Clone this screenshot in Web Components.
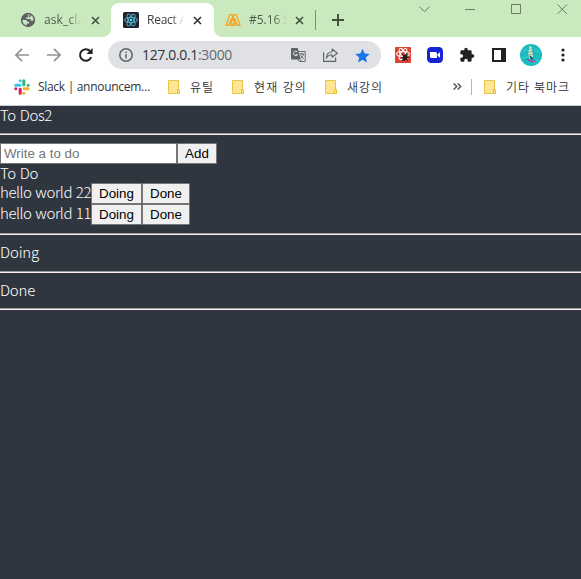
<!DOCTYPE html>
<html lang="ko"><head><meta charset="utf-8"><title>React App</title>
<style>
html,body{margin:0;height:100%;overflow:hidden}
body{font-family:"Open Sans","Noto Sans CJK KR",sans-serif;background:#2f3640}
</style></head><body>
<browser-window></browser-window>
<script>
const define=(name,html,after)=>customElements.define(name,class extends HTMLElement{
  constructor(){super();const t=document.createElement('template');t.innerHTML=html;this.attachShadow({mode:'open'}).append(t.content.cloneNode(true));}
  connectedCallback(){if(after)after(this,this.shadowRoot);}
});

/* One line of text whose tracking is adjusted so that it spans the given width. */
define('fit-text',`<style>:host{display:block;flex:none;white-space:pre;overflow:visible}span{display:inline-block}</style><span><slot></slot></span>`,(el,r)=>{
  const w=+el.getAttribute('w');el.style.width=w+'px';
  const s=r.querySelector('span'),n=el.textContent.length;
  const now=s.getBoundingClientRect().width;
  if(now)s.style.letterSpacing=((w-now)/n)+'px';
});

const icons={
globe:['0 0 16 16','<circle cx="8" cy="8" r="7.2" fill="#5f6368"/><path d="M2.5 8.1h3.3q1.5.1 1.6 1.7H9v1.6H6.6v2.2C3.8 13 2.4 10.8 2.5 8.1M7.7 2.4h1.8c.2.9-.4 1.5-1.4 1.5v1.5H6.4V7h4.3v1.8h2.4l.4-.5c.2-2.3-1-4.4-2.8-5.3v1.4l-1.2 1.2" fill="#cbe9bf"/>'],
x:['0 0 9 9','<path d="M1 1l7 7M8 1L1 8" stroke="currentColor" stroke-width="1.6" fill="none"/>'],
react:['0 0 16 16','<rect width="16" height="16" rx="1.5" fill="#20232a"/><g fill="none" stroke="#55bcd8" stroke-width=".9"><ellipse cx="8" cy="8" rx="6.5" ry="2.6"/><ellipse cx="8" cy="8" rx="6.5" ry="2.6" transform="rotate(60 8 8)"/><ellipse cx="8" cy="8" rx="6.5" ry="2.6" transform="rotate(120 8 8)"/></g><circle cx="8" cy="8" r="1.3" fill="#61dafb"/>'],
nomad:['0 0 16 14','<path d="M1 12.4L4.7 1.7H7l3.6 10.7M1 12.4h2.6L6.6 5M5.4 12.4L9 1.7h2.4L15 12.4h-2.6L9.4 5M5.4 12.4h2.2l1-3M10.6 12.4H8.4" fill="none" stroke="#f9a11b" stroke-width="1.25" stroke-linejoin="round"/>'],
plus:['0 0 12 12','<path d="M6 0v12M0 6h12" stroke="#3f4f3d" stroke-width="1.9"/>'],
chev:['0 0 11 7','<path d="M.6.7l4.9 5 4.9-5" fill="none" stroke="#68805f" stroke-width="1"/>'],
min:['0 0 11 11','<path d="M0 5.5h10" stroke="#68805f" stroke-width="1"/>'],
max:['0 0 11 11','<path d="M.5.5h9v9h-9z" fill="none" stroke="#68805f" stroke-width="1"/>'],
close:['0 0 11 11','<path d="M.5.5l9.5 9.5m0-9.5l-9.5 9.5" stroke="#68805f" stroke-width="1"/>'],
back:['0 0 16 14','<path d="M15 7H2M8 .9L1.9 7 8 13.1" fill="none" stroke="#919397" stroke-width="1.7"/>'],
fwd:['0 0 16 14','<path d="M1 7h13M8 .9L14.1 7 8 13.1" fill="none" stroke="#919397" stroke-width="1.7"/>'],
reload:['0 0 16 16','<path d="M13.2 10.2A5.8 5.8 0 1 1 12.1 4" fill="none" stroke="#202124" stroke-width="2"/><path d="M14.6 1v6.1H8.5z" fill="#202124"/>'],
info:['0 0 14 14','<circle cx="7" cy="7" r="6.2" fill="none" stroke="#5f6368" stroke-width="1.5"/><path d="M7 6v4.4M7 3.5v1.6" stroke="#5f6368" stroke-width="1.5"/>'],
trans:['0 0 15 15','<path d="M5.5 3.5h8.7v10H8.3L6.5 11" fill="none" stroke="#686b70" stroke-width="1"/><path d="M1 0h5.7l3 11.5H1q-1 0-1-1V1q0-1 1-1" fill="#5f6368"/><path d="M6.4 4.1a2.2 2.2 0 1 0 .2 2.5H4.5" fill="none" stroke="#e4e4e7"/><path d="M8.3 6h5M11 5v1m1.4 0c0 2-1.5 3-2.8 4M9.6 7.3l3 3.6M9 14l1.3-2.4" fill="none" stroke="#5f6368" stroke-width="1"/>'],
share:['0 0 15 14','<path d="M.6 4.3v9h12V9.6" fill="none" stroke="#5f6368" stroke-width="1.2"/><path d="M9.1 1l5.2 4.2-5.2 4V6.8q-3.8 0-5.8 3.4.4-6 5.8-6.5z" fill="none" stroke="#5f6368" stroke-width="1.1" stroke-linejoin="round"/>'],
star:['0 0 16 15','<path d="M8 .3l2.2 5 5.5.5-4.2 3.7 1.3 5.4L8 12.1l-4.8 2.8 1.3-5.4L.3 5.8l5.5-.5z" fill="#1a73e8"/>'],
rdev:['0 0 16 16','<rect width="16" height="16" rx=".7" fill="#dd4436"/><g fill="none" stroke="#fff" stroke-width="1.1"><ellipse cx="8" cy="7" rx="6.4" ry="2.5"/><ellipse cx="8" cy="7" rx="6.2" ry="2.4" transform="rotate(60 8 7)"/><ellipse cx="8" cy="7" rx="6.2" ry="2.4" transform="rotate(120 8 7)"/></g><path d="M7 7l2 2m3-3l-1 2M6 11l3-1m5 0l-3 1m-4 3l2-2m4 2l-2-2" stroke="#281c1c" stroke-width="1"/><ellipse cx="10" cy="10.5" rx="2.3" ry="3.2" fill="#281c1c" transform="rotate(25 10 10.5)"/>'],
zoomer:['0 0 16 16','<rect width="16" height="16" rx="4.2" fill="#1723d4"/><path d="M3 5h5.5q1.4 0 1.4 1.4V11H4.5Q3 11 3 9.5zM10.5 7.2L13 5.3v5.4l-2.5-1.9z" fill="#fff"/>'],
puzzle:['0 0 24 24','<path d="M20.5 11H19V7a2 2 0 0 0-2-2h-4V3.5a2.5 2.5 0 0 0-5 0V5H4a2 2 0 0 0-2 2v3.8h1.5a2.7 2.7 0 0 1 0 5.4H2V20a2 2 0 0 0 2 2h3.8v-1.5a2.7 2.7 0 0 1 5.4 0V22H17a2 2 0 0 0 2-2v-4h1.5a2.5 2.5 0 0 0 0-5z" fill="#202124"/>'],
panel:['0 0 14 14','<path d="M0 0h14v14H0zM2 2v10h7V2z" fill="#202124" fill-rule="evenodd"/>'],
avatar:['0 0 22 22','<circle cx="11" cy="11" r="11" fill="#18bcc1"/><path d="M2 8l5-3M14 5l6 4M2 14l7-1M13 19l6-3" stroke="#48d0cc" stroke-width="1"/><path d="M9.4 2.3l1.9.2 1.7 10-3.8 2-.8-5z" fill="#eee6bb"/><path d="M9 5.4l2.7-.6M8.8 8.3l3.4-.8M9 11.2l3.5-.8" stroke="#8b8a89" stroke-width=".8"/><path d="M10 12l2.5 3.5" stroke="#2e4460" stroke-width="1.5"/><path d="M7 15q4 3.5 8.5 2.2" fill="none" stroke="#c438a1" stroke-width="1.4"/>'],
dots:['0 0 4 14','<g fill="#202124"><circle cx="2" cy="2" r="1.6"/><circle cx="2" cy="7" r="1.6"/><circle cx="2" cy="12" r="1.6"/></g>'],
slack:['0 0 16 16','<g stroke-width="3.1" stroke-linecap="round"><path d="M1.8 6.2h4" stroke="#36c5f0"/><path d="M6.2 1.8h0" stroke="#36c5f0"/><path d="M9.8 1.8v4M14.2 6.2h0" stroke="#2eb67d"/><path d="M6.2 10.2v4M1.8 9.8h0" stroke="#e01e5a"/><path d="M10.2 9.8h4M9.8 14.2h0" stroke="#ecb22e"/></g>'],
folder:['0 0 12 14','<path d="M.5.5h10v9h1v4H.5z" fill="#ffe491" stroke="#e9c44d"/><path d="M9.5 13.5v-4h2v4z" fill="#ffe491" stroke="#e9c03b"/>'],
more:['0 0 9 7','<path d="M.7.5l3 3-3 3M4.7.5l3 3-3 3" fill="none" stroke="#55585d" stroke-width="1.5"/>']
};
define('ui-icon',`<style>:host{display:block;flex:none}svg{display:block;width:100%;height:100%}</style>`,(el,r)=>{
  const [v,b]=icons[el.getAttribute('name')];el.style.width=el.getAttribute('w')+'px';el.style.height=el.getAttribute('h')+'px';
  r.innerHTML+=`<svg viewBox="${v}">${b}</svg>`;
});

define('browser-tab',`<style>
:host{display:flex;align-items:center;box-sizing:border-box;flex:none;height:35px;font-size:12px;color:#4f5d4b;position:relative}
:host([active]){background:#fff;border-radius:8px 8px 0 0;color:#3c4043}
:host([active])::before,:host([active])::after{content:"";position:absolute;bottom:0;width:8px;height:8px}
:host([active])::before{left:-8px;background:radial-gradient(circle at 0 0,transparent 7.6px,#fff 8px)}
:host([active])::after{right:-8px;background:radial-gradient(circle at 100% 0,transparent 7.6px,#fff 8px)}
.t{overflow:hidden;flex:none;padding-bottom:2px;-webkit-mask-image:linear-gradient(90deg,#000 65%,transparent 98%)}
</style><slot name="icon"></slot><div class="t"><slot></slot></div><slot name="x"></slot>`,(el,r)=>{
  const t=r.querySelector('.t');t.style.width=el.getAttribute('tw')+'px';t.style.marginLeft=el.getAttribute('tl')+'px';
});

define('tab-strip',`<style>
:host{display:flex;height:37px;background:#cbe9bf;box-sizing:border-box}
.tabs{display:flex;align-items:flex-end;height:37px;flex:none}
browser-tab{height:34px}
.one{width:111px;padding-left:20px;box-sizing:border-box}
.two{width:103px;padding-left:12px}
.three{width:101px;padding-left:11px}
[slot=x]{margin-left:9px;color:#40513d}
.two [slot=x]{color:#303236;margin-left:8px}.three [slot=x]{margin-left:7px}
.sep{width:1px;height:20px;background:#7a9172;align-self:flex-start;margin-top:10px}
.new{margin:14px 0 0 16px}
.ctl{display:flex;margin-left:auto;padding:4px 13px 0 0;gap:35px;align-items:flex-start}
</style>
<div class="tabs">
<browser-tab class="one" tl="8" tw="38"><ui-icon slot="icon" name="globe" w="16" h="16"></ui-icon><fit-text w="46">ask_clas</fit-text><ui-icon slot="x" name="x" w="9" h="9"></ui-icon></browser-tab>
<browser-tab active class="two" tl="8" tw="38"><ui-icon slot="icon" name="react" w="16" h="16"></ui-icon><fit-text w="54">React App</fit-text><ui-icon slot="x" name="x" w="9" h="9"></ui-icon></browser-tab>
<browser-tab class="three" tl="8" tw="39"><ui-icon slot="icon" name="nomad" w="16" h="14"></ui-icon><fit-text w="41">#5.16 S</fit-text><ui-icon slot="x" name="x" w="9" h="9"></ui-icon></browser-tab>
</div><div class="sep"></div><ui-icon class="new" name="plus" w="12" h="12"></ui-icon>
<div class="ctl"><ui-icon name="chev" w="11" h="11"></ui-icon><ui-icon name="min" w="11" h="11"></ui-icon><ui-icon name="max" w="11" h="11"></ui-icon><ui-icon name="close" w="11" h="11"></ui-icon></div>`);

define('tool-bar',`<style>
:host{display:flex;height:35px;padding-left:14px;background:#fff;align-items:center;box-sizing:border-box;padding-top:1px}
.nav{display:flex;gap:16px;align-items:center;flex:none}
.url{display:flex;align-items:center;box-sizing:border-box;height:28px;width:273px;border-radius:14px;background:#e0e1e5;margin-left:14px;padding:0 11px;font-size:14px;color:#66696e;flex:none}
.url fit-text{margin:-1px 0 0 9px}b{font-weight:400;color:#303236}
.act{display:flex;align-items:center;gap:17px;margin-left:auto}
.ext{display:flex;align-items:center;gap:16px;margin-left:14px}
</style><div class="nav"><ui-icon name="back" w="16" h="14"></ui-icon><ui-icon name="fwd" w="16" h="14"></ui-icon><ui-icon name="reload" w="16" h="16"></ui-icon></div>
<div class="url"><ui-icon name="info" w="14" h="14"></ui-icon><fit-text w="90"><b>127.0.0.1</b>:3000</fit-text><div class="act"><ui-icon name="trans" w="15" h="15"></ui-icon><ui-icon name="share" w="15" h="14"></ui-icon><ui-icon name="star" w="15" h="15"></ui-icon></div></div>
<div class="ext"><ui-icon name="rdev" w="16" h="16"></ui-icon><ui-icon name="zoomer" w="16" h="16"></ui-icon><ui-icon name="puzzle" w="16" h="16"></ui-icon><ui-icon name="panel" w="14" h="14" style="margin-left:1px"></ui-icon><ui-icon name="avatar" w="22" h="22" style="margin-left:-2px"></ui-icon><ui-icon name="dots" w="4" h="14" style="margin-left:3px"></ui-icon></div>`);

define('bookmark-item',`<style>:host{display:flex;align-items:center;flex:none}::slotted(fit-text){margin-left:8px}</style><slot></slot>`);
define('bookmark-bar',`<style>
:host{display:flex;align-items:center;box-sizing:border-box;height:34px;padding:0 11px 4px 14px;border-bottom:1px solid #c9ccd0;background:#fff;font-size:12px;color:#303236}
.f{margin-left:18px}.f fit-text{margin-left:10px;font-weight:350}
.more{margin-left:auto}.sep{width:1px;height:16px;background:#b9b2b6;margin:0 12px 0 9px}
.last{margin:0}
</style><bookmark-item><ui-icon name="slack" w="16" h="16"></ui-icon><fit-text w="112">Slack | announcem…</fit-text></bookmark-item>
<bookmark-item class="f"><ui-icon name="folder" w="12" h="14"></ui-icon><fit-text w="24">유틸</fit-text></bookmark-item>
<bookmark-item class="f"><ui-icon name="folder" w="12" h="14"></ui-icon><fit-text w="53">현재 강의</fit-text></bookmark-item>
<bookmark-item class="f"><ui-icon name="folder" w="12" h="14"></ui-icon><fit-text w="36">새강의</fit-text></bookmark-item>
<ui-icon class="more" name="more" w="9" h="7"></ui-icon><div class="sep"></div>
<bookmark-item class="f last"><ui-icon name="folder" w="12" h="14"></ui-icon><fit-text w="64">기타 북마크</fit-text></bookmark-item>`);

define('push-button',`<style>:host{display:block;flex:none}button{box-sizing:border-box;width:100%;height:21px;margin:0;padding:1px 0 0;border:1px solid #767676;border-radius:1px;background:#f0f0f0;color:#000;font:13.333px/18px "Liberation Sans",Arial,sans-serif;display:flex;justify-content:center}</style><button><slot></slot></button>`);
define('todo-item',`<style>:host{display:flex;height:21px;align-items:center}.d{width:51px}.n{width:48px}</style><slot></slot><push-button class="d"><fit-text w="35">Doing</fit-text></push-button><push-button class="n"><fit-text w="32">Done</fit-text></push-button>`);
define('todo-page',`<style>
:host{display:block;flex:1;background:#2f3640;color:#fff;font:300 15px/19.2px "Noto Sans CJK KR",sans-serif}
fit-text{box-sizing:border-box;height:19.2px;line-height:17.2px}
todo-item fit-text{line-height:16.6px}
push-button fit-text{height:auto;line-height:18px}
hr{margin:8px 0;border:solid;border-color:#9a9a9a #fff0f0 #fff0f0 #9a9a9a;border-width:1px 0}
.form{display:flex;height:21px}
input{display:block;box-sizing:border-box;width:177px;height:21px;margin:0;padding:1px 3px;border:1px solid #767676;border-radius:0;background:#fff;font:13.333px "Liberation Sans",Arial,sans-serif}
input::placeholder{color:#757575}
.add{width:40px}
</style>
<fit-text w="52">To Dos2</fit-text><hr>
<div class="form"><input placeholder="Write a to do"><push-button class="add"><fit-text w="24">Add</fit-text></push-button></div>
<fit-text w="38">To Do</fit-text>
<todo-item><fit-text w="91">hello world 22</fit-text></todo-item>
<todo-item><fit-text w="91">hello world 11</fit-text></todo-item>
<hr><fit-text w="39">Doing</fit-text><hr><fit-text w="35">Done</fit-text><hr>`);

define('browser-window',`<style>:host{display:flex;flex-direction:column;width:581px;height:579px;overflow:hidden}tab-strip,tool-bar,bookmark-bar{flex:none}</style><tab-strip></tab-strip><tool-bar></tool-bar><bookmark-bar></bookmark-bar><todo-page></todo-page>`);
</script></body></html>
